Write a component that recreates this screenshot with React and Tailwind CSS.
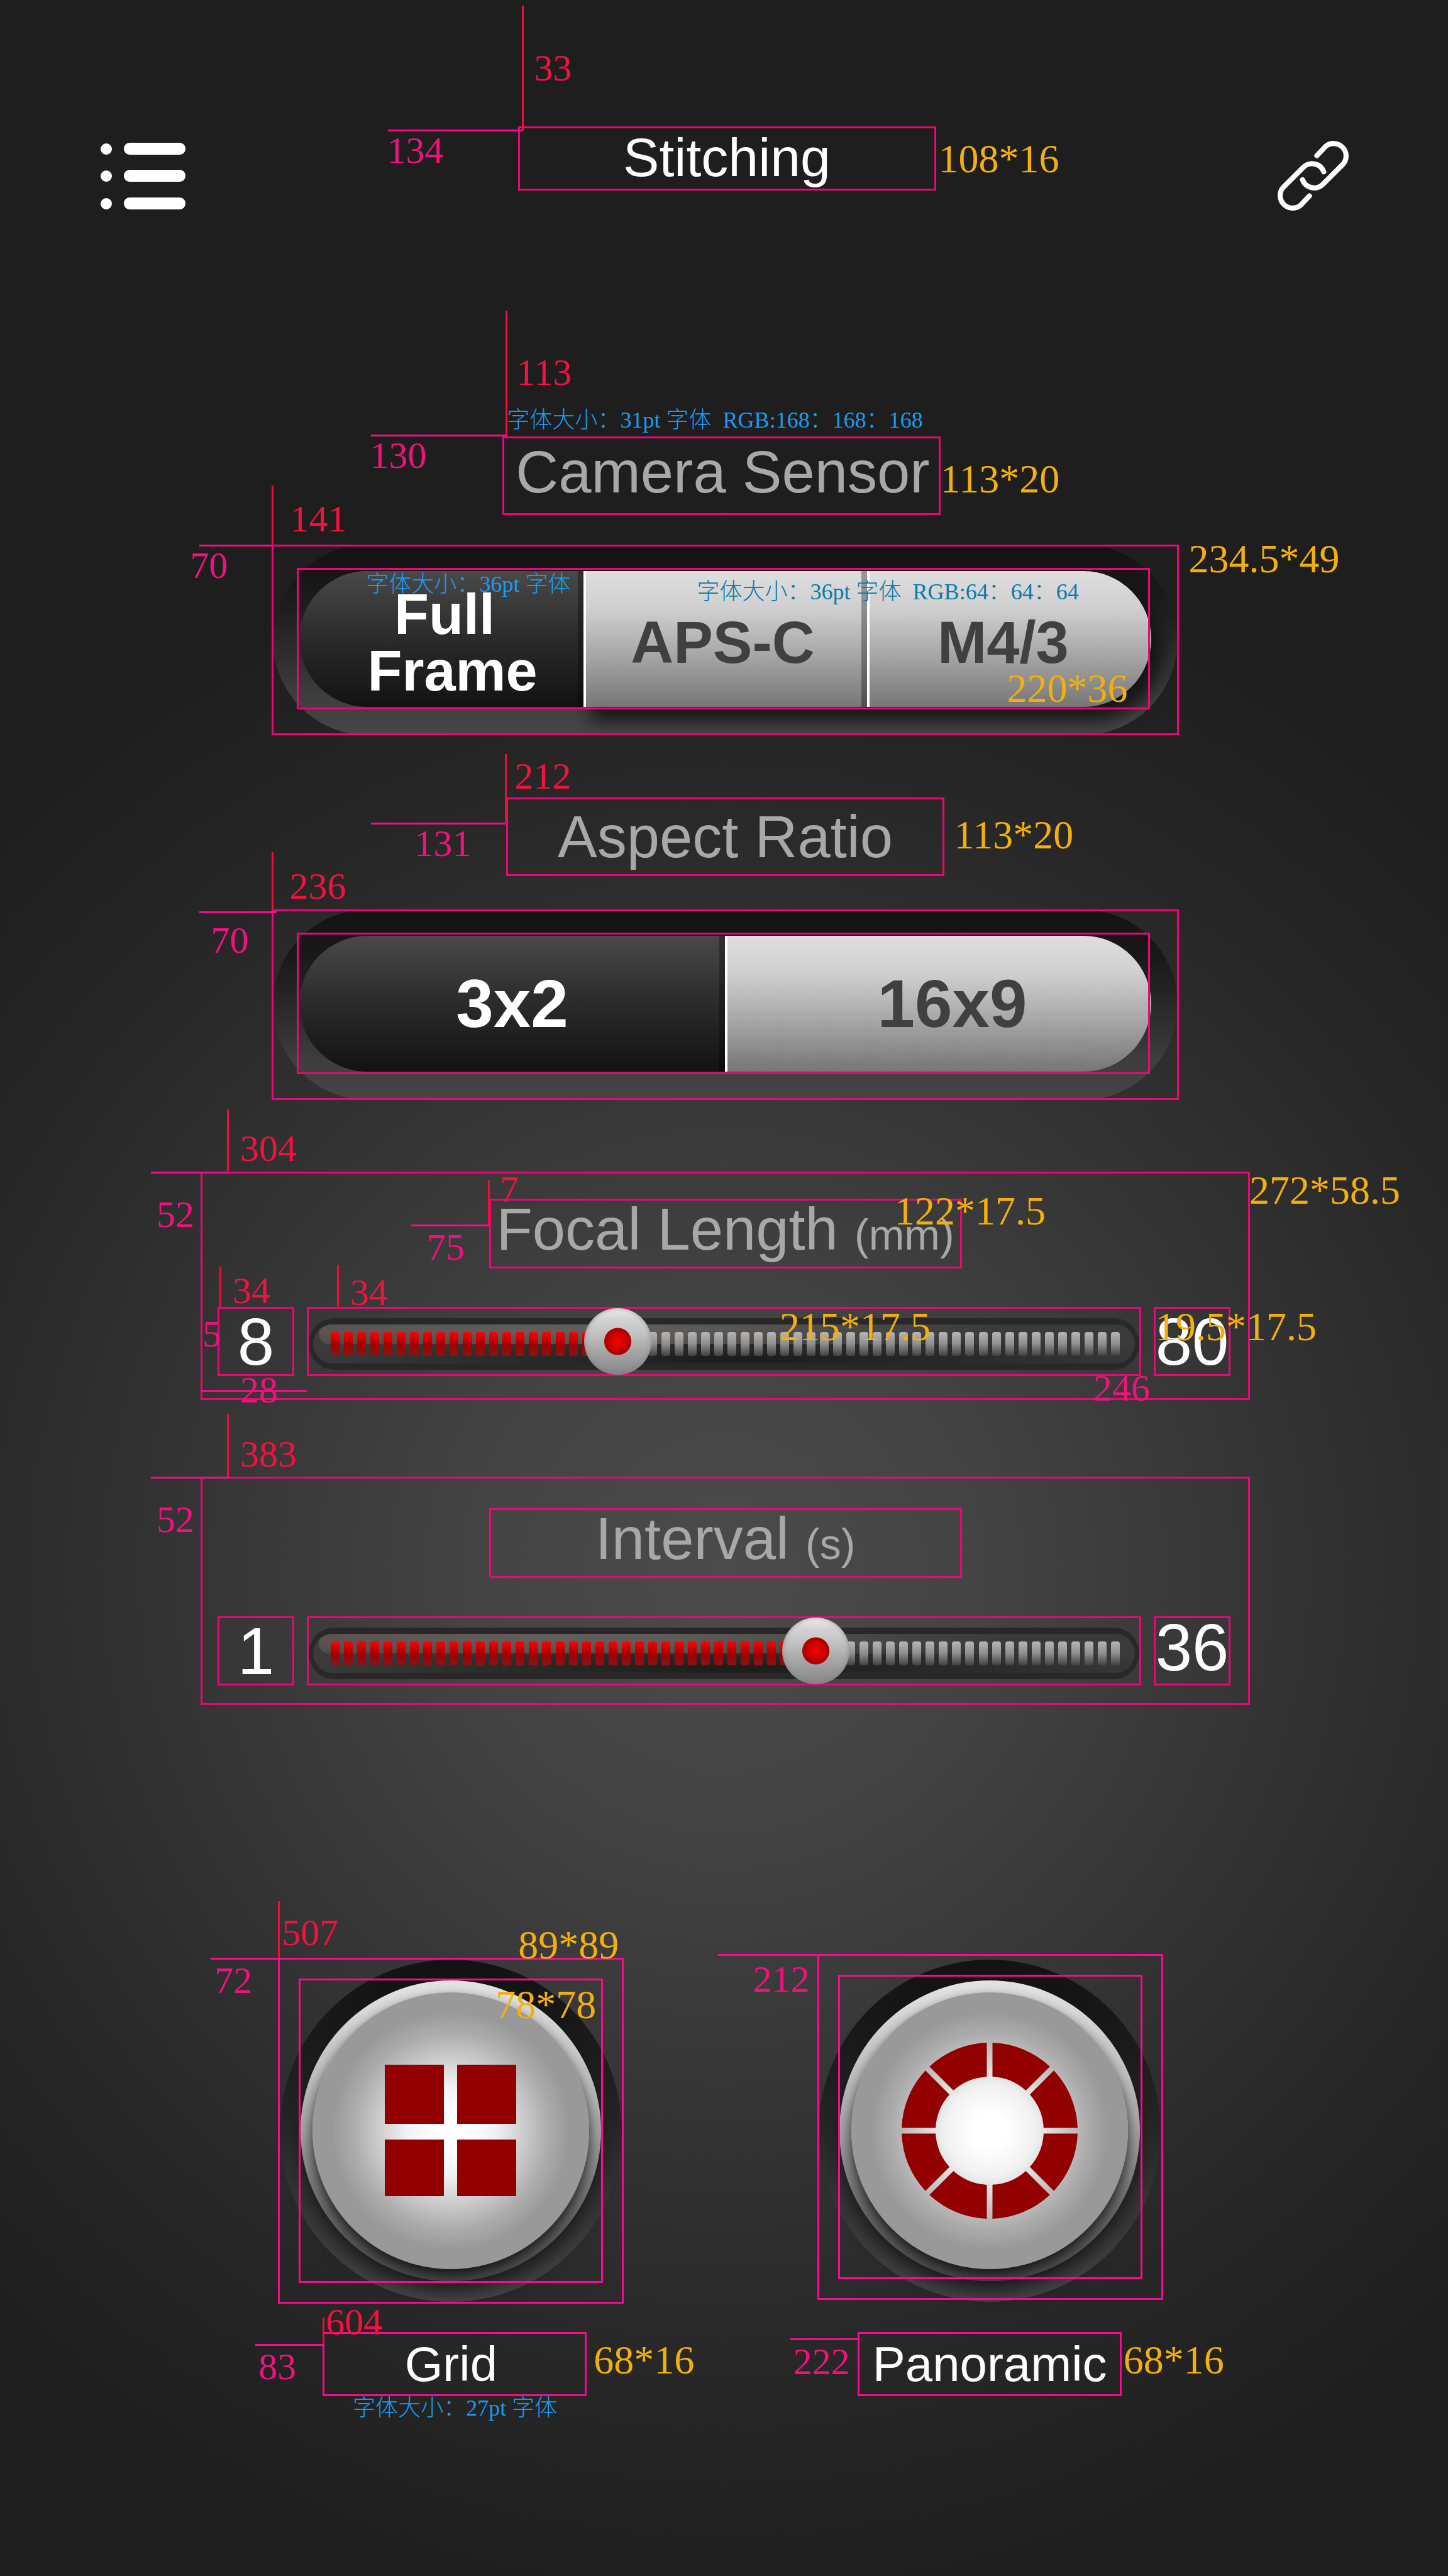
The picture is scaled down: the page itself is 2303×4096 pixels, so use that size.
import { useState } from "react";

const tones = {
  red: "text-[60px] text-[#f0123f]",
  pink: "text-[60px] text-[#f0127c]",
  yellow: "text-[64px] text-[#f2af0d]",
  blue: "text-[36px] font-light text-[#1a9bf0]",
  teal: "text-[36px] font-light text-[#0d7aab]",
};

function Note({ tone, at, children }) {
  return (
    <span
      className={`pointer-events-none absolute z-20 mt-[2px] ml-[2px] whitespace-pre font-['Liberation_Serif','Noto_Sans_CJK_SC',serif] leading-none ${tones[tone]} ${at}`}
    >
      {children}
    </span>
  );
}

function VLine({ at }) {
  return <span aria-hidden="true" className={`pointer-events-none absolute z-20 w-[3px] bg-[#f50a3c] ${at}`} />;
}

function HLine({ at }) {
  return <span aria-hidden="true" className={`pointer-events-none absolute z-20 h-[3px] bg-[#fa0a8c] ${at}`} />;
}

const frame = "outline-3 -outline-offset-3 outline-[#ee0576]";

function ListIcon() {
  return (
    <svg viewBox="0 0 135 106" className="h-[106px] w-[135px]" fill="#fff" aria-hidden="true">
      {[0, 43, 87].map((y) => (
        <g key={y}>
          <circle cx="9" cy={y + 10} r="9" />
          <rect x="37" y={y} width="98" height="19" rx="9" />
        </g>
      ))}
    </svg>
  );
}

function ChainIcon() {
  const half = "M86 33 L105 13 A27 27 0 0 1 143 51 L99 95 A27 27 0 0 1 55 85";
  return (
    <svg
      viewBox="0 0 156 153"
      className="h-[113px] w-[115px]"
      fill="none"
      stroke="#fff"
      strokeWidth="11"
      strokeLinecap="round"
      aria-hidden="true"
    >
      <path d={half} />
      <path d={half} transform="rotate(180 78 76.5)" />
    </svg>
  );
}

function Segmented({ label, options, value, onChange, columns, shaded }) {
  return (
    <div className={`relative w-full ${frame}`}>
      <div
        role="group"
        aria-label={label}
        className="mx-[2px] rounded-full bg-[linear-gradient(to_bottom,#131313,#191919_25%,#232323_42%,#2f2f2f_60%,#3d3d3d_78%,#464646)] px-[42px] pt-[42px] pb-[45px]"
      >
        <div className={`relative grid h-[216px] ${columns}`}>
          {shaded && (
            <span
              aria-hidden="true"
              className="absolute inset-y-0 right-0 w-2/3 rounded-r-full shadow-[14px_20px_26px_2px_rgba(15,15,15,0.85)]"
            />
          )}
          {options.map((o, i) => {
            const on = o.id === value;
            const first = i === 0;
            const last = i === options.length - 1;
            return (
              <button
                key={o.id}
                type="button"
                aria-pressed={on}
                onClick={() => onChange(o.id)}
                className={[
                  "relative flex items-center justify-center text-center font-bold",
                  first ? "rounded-l-full" : "border-l-4 border-white",
                  last ? "rounded-r-full" : "shadow-[inset_-9px_0_0_rgba(0,0,0,0.32)]",
                  on
                    ? "bg-[linear-gradient(to_bottom,#494949,#2d2d2d_45%,#121212)] text-white"
                    : "bg-[linear-gradient(to_bottom,#dedede,#cfcfcf_28%,#a9a9a9_60%,#767676)] text-[#404040]",
                  o.text,
                ].join(" ")}
              >
                <span>
                  {o.lines.map((line) => (
                    <span key={line} className="block whitespace-pre">
                      {line}
                    </span>
                  ))}
                </span>
              </button>
            );
          })}
        </div>
      </div>
      <span
        aria-hidden="true"
        className={`pointer-events-none absolute top-[37px] right-[46px] bottom-[41px] left-[40px] ${frame}`}
      />
    </div>
  );
}

function Slider({ id, min, max, step, value, onChange }) {
  const t = (value - min) / (max - min);
  const lit = Math.round(1 + 57.6 * t);
  return (
    <div className={`relative flex h-[110px] flex-1 items-center pt-2 ${frame}`}>
      <div className="mx-[3px] w-full rounded-full bg-[#282828] px-[7px] py-[10px]">
        <div className="relative flex h-[62px] items-center justify-between overflow-hidden rounded-full bg-[radial-gradient(ellipse_55%_75%_at_52%_88%,#1c1c1a,#2a2a28_50%,transparent),linear-gradient(to_bottom,#3a3a3a,#3c3c3c)] pr-[24px] pl-[28px]">
          <span
            aria-hidden="true"
            className="absolute top-0 left-[9px] h-[31px] w-5/6 rounded-l-full bg-[linear-gradient(to_right,#5c5350,#625d5a_30%,#605c59_50%,transparent)]"
          />
          <span
            aria-hidden="true"
            className="absolute top-0 left-[9px] h-[31px] w-5/6 rounded-l-full bg-[linear-gradient(to_bottom,transparent_45%,rgba(60,56,54,0.35))]"
          />
          {Array.from({ length: 60 }, (_, i) => (
            <span
              key={i}
              aria-hidden="true"
              className={
                i < lit
                  ? "relative h-[38px] w-[14px] rounded-[4px] bg-[linear-gradient(to_bottom,#ff0000,#a00000_55%,#86161a)]"
                  : "relative h-[38px] w-[14px] rounded-[4px] bg-[linear-gradient(to_bottom,#b6b6b6,#8e8e8e_50%,#404040)]"
              }
            />
          ))}
        </div>
      </div>
      <input
        id={id}
        type="range"
        min={min}
        max={max}
        step={step}
        value={value}
        onChange={(e) => onChange(Number(e.target.value))}
        className="absolute inset-x-[3px] top-[2px] m-0 h-[106px] cursor-pointer appearance-none bg-transparent [&::-webkit-slider-runnable-track]:h-[106px] [&::-webkit-slider-thumb]:h-[106px] [&::-webkit-slider-thumb]:w-[107px] [&::-webkit-slider-thumb]:appearance-none [&::-webkit-slider-thumb]:rounded-full [&::-webkit-slider-thumb]:bg-[radial-gradient(circle_at_center,#ff0000,#a80000_21px,transparent_22px),linear-gradient(to_bottom,#f0f0f0,#d4d4d4_16%,#c2c2c2_38%,#a8a8a8_62%,#868686)] [&::-webkit-slider-thumb]:shadow-[inset_0_0_6px_1px_rgba(120,120,120,0.6)]"
      />
    </div>
  );
}

function RangePanel({ id, title, unit, min, max, step, initial, pad, maxLeading, children }) {
  const [value, setValue] = useState(initial);
  return (
    <section className={`relative w-[72.6%] ${frame} ${pad}`}>
      <label
        htmlFor={id}
        className={`mx-auto block h-[111px] w-[752px] max-w-full pt-[3px] text-center text-[94px] leading-[91px] whitespace-nowrap text-[#a8a8a8] ${frame}`}
      >
        {title} <span className="text-[68px]">{unit}</span>
      </label>
      <div className="mt-[61px] flex gap-5 pr-[31px] pl-[27px]">
        <span className={`block h-[110px] w-[122px] pt-[3px] text-center text-[105px] leading-[105px] text-white ${frame}`}>
          {min}
        </span>
        <Slider id={id} min={min} max={max} step={step} value={value} onChange={setValue} />
        <span className={`block h-[110px] w-[122px] pt-[3px] text-center text-[105px] text-white ${maxLeading} ${frame}`}>
          {max}
        </span>
      </div>
      {children}
    </section>
  );
}

function ModeButton({ label, lift, labelBox, icon, children }) {
  return (
    <div className="relative w-[549px]">
      <div className="flex h-[549px] items-center justify-center">
        <div className="flex size-[544px] items-center justify-center rounded-full bg-[linear-gradient(to_bottom,#121212,#1b1b1b_25%,#262626_48%,#343434_68%,#464646)]">
          <button
            type="button"
            aria-label={label}
            className="flex size-[478px] items-center justify-center rounded-full bg-[linear-gradient(to_bottom,#e4e4e4,#c4c4c4_28%,#a4a4a4_50%,#6e6e6e_75%,#4a4a4a)] shadow-[0_18px_28px_rgba(20,20,20,0.75)]"
          >
            <span className="flex size-[440px] items-center justify-center rounded-full bg-[radial-gradient(circle_closest-side,#fff_12%,#f2f2f2_32%,#cdcdcd_52%,#adadad_70%,#999_86%)] shadow-[0_10px_20px_rgba(0,0,0,0.75)]">
              {icon}
            </span>
          </button>
        </div>
      </div>
      <span
        aria-hidden="true"
        className={`pointer-events-none absolute left-0 size-[550px] outline-3 -outline-offset-3 outline-[#fa0a8c] ${lift}`}
      >
        <span className="absolute inset-[33px] outline-3 -outline-offset-3 outline-[#fa0a8c]" />
      </span>
      <p
        className={`mt-[46px] h-[102px] w-[420px] pt-[3px] text-center text-[78px] leading-[96px] text-white outline-3 -outline-offset-3 outline-[#fa0a8c] ${labelBox}`}
      >
        {label}
      </p>
      {children}
    </div>
  );
}

function GridIcon() {
  return (
    <svg viewBox="-2 0 213 209" className="h-[209px] w-[213px]" fill="#930000" aria-hidden="true">
      <rect x="0" y="0" width="94" height="94" />
      <rect x="115" y="0" width="94" height="94" />
      <rect x="0" y="119" width="94" height="90" />
      <rect x="115" y="119" width="94" height="90" />
    </svg>
  );
}

function PanoramicIcon() {
  return (
    <svg viewBox="-140 -140 280 280" className="size-[280px]" fill="#930000" aria-hidden="true">
      {[0, 45, 90, 135, 180, 225, 270, 315].map((a) => (
        <path
          key={a}
          transform={`rotate(${a})`}
          d="M4.5 -139.9 A140 140 0 0 1 95.8 -102.1 L57.5 -63.9 A86 86 0 0 0 4.5 -85.9 Z"
        />
      ))}
    </svg>
  );
}

const sensors = [
  { id: "full", lines: ["Full ", "Frame"], text: "z-10 pt-3 pl-9 text-[90px] leading-[90px]" },
  { id: "apsc", lines: ["APS-C"], text: "pt-3 pr-3 text-[94px] leading-[94px]" },
  { id: "m43", lines: ["M4/3"], text: "pt-3 pr-6 text-[94px] leading-[94px]" },
];

const ratios = [
  { id: "3x2", lines: ["3x2"], text: "text-[107px] leading-[107px]" },
  { id: "16x9", lines: ["16x9"], text: "pl-10 text-[107px] leading-[107px]" },
];

export default function App() {
  const [sensor, setSensor] = useState("full");
  const [ratio, setRatio] = useState("3x2");
  return (
    <main className="flex min-h-screen w-full flex-col items-center overflow-hidden bg-[#1e1e1e] bg-[radial-gradient(circle_73vw_at_50%_61%,#4b4b4b,#434343_25%,#343434_52%,#272727_76%,#1e1e1e)] pb-[286px] pl-1 font-['Liberation_Sans','Noto_Sans_CJK_SC',sans-serif]">
      <header className="grid w-full grid-cols-[1fr_auto_1fr] items-start pt-[201px] pr-[157px] pl-[156px]">
        <button type="button" aria-label="Menu" className="mt-[26px] justify-self-start">
          <ListIcon />
        </button>
        <div className="relative ml-[6px]">
          <h1 className={`h-[102px] w-[665px] pt-[3px] text-center text-[86px] leading-[92px] text-white ${frame}`}>
            Stitching
          </h1>
          <VLine at="left-[6px] top-[-192px] h-[199px]" />
          <Note tone="red" at="left-[24px] top-[-125px]">33</Note>
          <HLine at="left-[-207px] top-[5px] w-[214px]" />
          <Note tone="pink" at="left-[-210px] top-[6px]">134</Note>
          <Note tone="yellow" at="left-[667px] top-[18px]">108*16</Note>
        </div>
        <button type="button" aria-label="Connection" className="mt-[22px] justify-self-end">
          <ChainIcon />
        </button>
      </header>

      <section className="relative mt-[358px] w-[62.8%]">
        <div className="pr-3">
          <h2 className={`mx-auto h-[125px] w-[697px] pt-[3px] pl-1 text-center text-[94px] leading-[107px] text-[#a8a8a8] ${frame}`}>
            Camera Sensor
          </h2>
        </div>
        <div className="mt-[47px]">
          <Segmented
            label="Camera Sensor"
            options={sensors}
            value={sensor}
            onChange={setSensor}
            columns="grid-cols-3"
            shaded
          />
        </div>
        <VLine at="left-[372px] top-[-200px] h-[200px]" />
        <Note tone="red" at="left-[388px] top-[-134px]">113</Note>
        <Note tone="blue" at="left-[373px] top-[-46px]">字体大小：31pt 字体  RGB:168：168：168</Note>
        <HLine at="left-[158px] top-[-3px] w-[215px]" />
        <Note tone="pink" at="left-[155px] top-[-2px]">130</Note>
        <VLine at="left-0 top-[-94px] mt-[172px] h-[94px]" />
        <Note tone="red" at="left-[28px] top-[99px]">141</Note>
        <HLine at="left-[-115px] top-[172px] w-[115px]" />
        <Note tone="pink" at="left-[-131px] top-[173px]">70</Note>
        <Note tone="yellow" at="left-[1062px] top-[34px]">113*20</Note>
        <Note tone="yellow" at="left-[1457px] top-[161px]">234.5*49</Note>
        <Note tone="blue" at="left-[149px] top-[215px]">字体大小：36pt 字体</Note>
        <Note tone="teal" at="left-[675px] top-[227px]">字体大小：36pt 字体  RGB:64：64：64</Note>
        <Note tone="yellow" at="left-[1168px] top-[367px]">220*36</Note>
      </section>

      <section className="relative mt-[99px] w-[62.8%]">
        <h2 className={`mx-auto h-[125px] w-[697px] pt-[3px] text-center text-[94px] leading-[119px] text-[#a8a8a8] ${frame}`}>
          Aspect Ratio
        </h2>
        <div className="mt-[53px]">
          <Segmented
            label="Aspect Ratio"
            options={ratios}
            value={ratio}
            onChange={setRatio}
            columns="grid-cols-2"
          />
        </div>
        <VLine at="left-[371px] top-[-69px] h-[110px]" />
        <Note tone="red" at="left-[385px] top-[-66px]">212</Note>
        <HLine at="left-[158px] top-[40px] w-[214px]" />
        <Note tone="pink" at="left-[226px] top-[41px]">131</Note>
        <VLine at="left-0 top-[87px] h-[91px]" />
        <Note tone="red" at="left-[27px] top-[109px]">236</Note>
        <HLine at="left-[-115px] top-[181px] w-[123px]" />
        <Note tone="pink" at="left-[-98px] top-[195px]">70</Note>
        <Note tone="yellow" at="left-[1084px] top-[26px]">113*20</Note>
      </section>

      <div className="mt-[114px] flex w-full flex-col items-center gap-[122px]">
        <RangePanel
          id="focal-length"
          title="Focal Length"
          unit="(mm)"
          min={8}
          max={80}
          step={1}
          initial={34}
          pad="pt-[43px] pb-[38px]"
          maxLeading="leading-[105px]"
        >
          <VLine at="left-[42px] top-[-99px] h-[98px]" />
          <Note tone="red" at="left-[61px] top-[-69px]">304</Note>
          <HLine at="left-[-79px] top-0 w-[124px]" />
          <Note tone="pink" at="left-[-72px] top-[36px]">52</Note>
          <VLine at="left-[457px] top-[14px] h-[72px]" />
          <Note tone="red" at="left-[474px] top-[-4px]">7</Note>
          <HLine at="left-[335px] top-[84px] w-[124px]" />
          <Note tone="pink" at="left-[358px] top-[88px]">75</Note>
          <Note tone="yellow" at="left-[1102px] top-[29px]">122*17.5</Note>
          <Note tone="yellow" at="left-[1666px] top-[-4px]">272*58.5</Note>
          <VLine at="left-[30px] top-[151px] h-[64px]" />
          <Note tone="red" at="left-[49px] top-[157px]">34</Note>
          <VLine at="left-[217px] top-[148px] h-[67px]" />
          <Note tone="red" at="left-[236px] top-[160px]">34</Note>
          <Note tone="pink" at="left-[1px] top-[226px]">5</Note>
          <HLine at="left-0 top-[347px] w-[169px]" />
          <Note tone="pink" at="left-[61px] top-[315px]">28</Note>
          <Note tone="pink" at="left-[1418px] top-[312px]">246</Note>
          <Note tone="yellow" at="left-[919px] top-[213px]">215*17.5</Note>
          <Note tone="yellow" at="left-[1517px] top-[213px]">19.5*17.5</Note>
        </RangePanel>

        <RangePanel
          id="interval"
          title="Interval"
          unit="(s)"
          min={1}
          max={36}
          step={0.1}
          initial={22.7}
          pad="pt-[50px] pb-[31px]"
          maxLeading="leading-[94px]"
        >
          <VLine at="left-[42px] top-[-100px] h-[100px]" />
          <Note tone="red" at="left-[61px] top-[-68px]">383</Note>
          <HLine at="left-[-79px] top-0 w-[124px]" />
          <Note tone="pink" at="left-[-72px] top-[36px]">52</Note>
        </RangePanel>
      </div>

      <div className="mt-[402px] w-full pr-4">
        <div className="mx-auto flex w-[61.6%] justify-between">
          <ModeButton label="Grid" lift="top-0" labelBox="ml-[71px] pr-3" icon={<GridIcon />}>
            <VLine at="left-0 top-[-90px] h-[90px]" />
            <Note tone="red" at="left-[4px] top-[-72px]">507</Note>
            <HLine at="left-[-107px] top-0 w-[107px]" />
            <Note tone="pink" at="left-[-103px] top-[4px]">72</Note>
            <Note tone="yellow" at="left-[380px] top-[-54px]">89*89</Note>
            <Note tone="yellow" at="left-[344px] top-[41px]">78*78</Note>
            <VLine at="left-[71px] top-[572px] h-[42px]" />
            <Note tone="red" at="left-[74px] top-[547px]">604</Note>
            <HLine at="left-[-36px] top-[614px] w-[108px]" />
            <Note tone="pink" at="left-[-33px] top-[618px]">83</Note>
            <Note tone="yellow" at="left-[500px] top-[606px]">68*16</Note>
            <Note tone="blue" at="left-[117px] top-[696px]">字体大小：27pt 字体</Note>
          </ModeButton>
          <ModeButton label="Panoramic" lift="top-[-6px]" labelBox="mx-auto" icon={<PanoramicIcon />}>
            <HLine at="left-[-158px] top-[-6px] w-[158px]" />
            <Note tone="pink" at="left-[-104px] top-[2px]">212</Note>
            <HLine at="left-[-43px] top-[605px] w-[108px]" />
            <Note tone="pink" at="left-[-40px] top-[610px]">222</Note>
            <Note tone="yellow" at="left-[485px] top-[606px]">68*16</Note>
          </ModeButton>
        </div>
      </div>
    </main>
  );
}
